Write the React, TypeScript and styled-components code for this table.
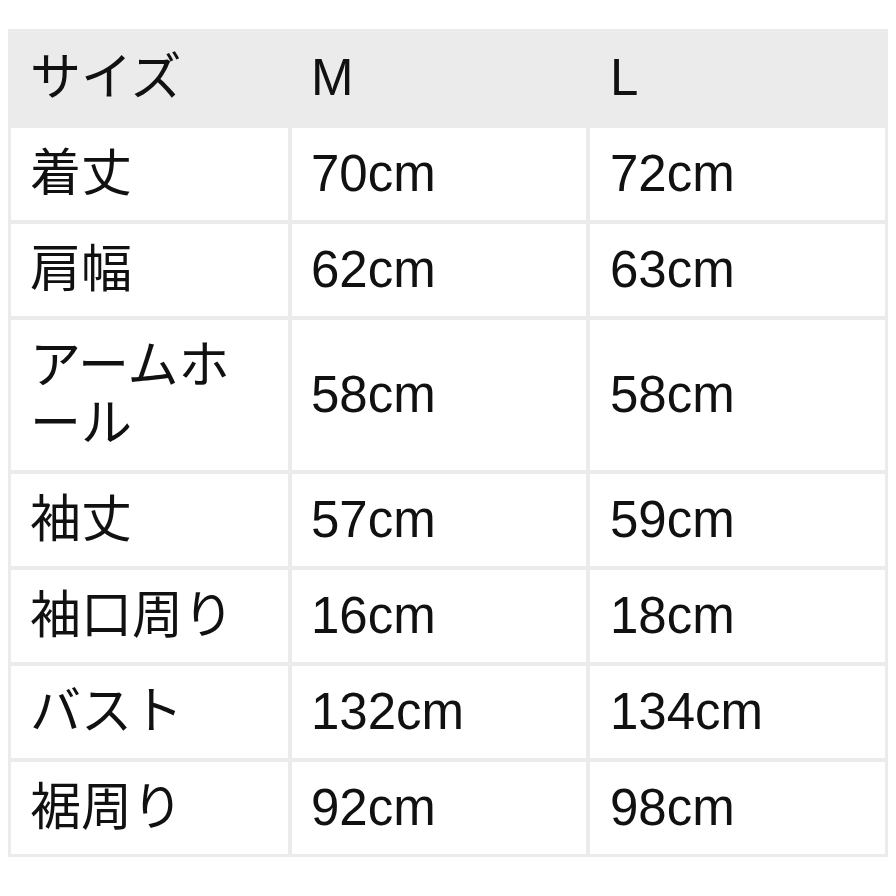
import React from "react";
import styled, { createGlobalStyle } from "styled-components";

const Global = createGlobalStyle`
  html, body { margin: 0; padding: 0; background: #ffffff; }
  body { font-family: "Liberation Sans", "Noto Sans CJK JP", sans-serif; }
`;

const Page = styled.div`
  padding: 29px 8px 0 8px;
`;

const Grid = styled.div`
  display: grid;
  grid-template-columns: 277px 294px 1fr;
  gap: 4px;
  padding: 3px;
  background: #ebebeb;
  width: 880px;
  box-sizing: border-box;
`;

const Cell = styled.div<{ $head?: boolean; $pl?: number }>`
  background: ${(p) => (p.$head ? "transparent" : "#ffffff")};
  padding: 17px 18px 17px ${(p) => p.$pl ?? 19}px;
  min-height: 58px;
  display: flex;
  align-items: center;
  font-family: "Liberation Sans", "Noto Sans CJK JP", sans-serif;
  font-size: 51px;
  line-height: 58px;
  color: #111111;
`;

const rows: [string, string, string][] = [
  ["着丈", "70cm", "72cm"],
  ["肩幅", "62cm", "63cm"],
  ["アームホール", "58cm", "58cm"],
  ["袖丈", "57cm", "59cm"],
  ["袖口周り", "16cm", "18cm"],
  ["バスト", "132cm", "134cm"],
  ["裾周り", "92cm", "98cm"],
];

export default function App() {
  return (
    <Page>
      <Global />
      <Grid>
        <Cell $head>サイズ</Cell>
        <Cell $head>M</Cell>
        <Cell $head $pl={20}>L</Cell>
        {rows.map((r) => (
          <React.Fragment key={r[0]}>
            <Cell>{r[0]}</Cell>
            <Cell>{r[1]}</Cell>
            <Cell $pl={20}>{r[2]}</Cell>
          </React.Fragment>
        ))}
      </Grid>
    </Page>
  );
}
